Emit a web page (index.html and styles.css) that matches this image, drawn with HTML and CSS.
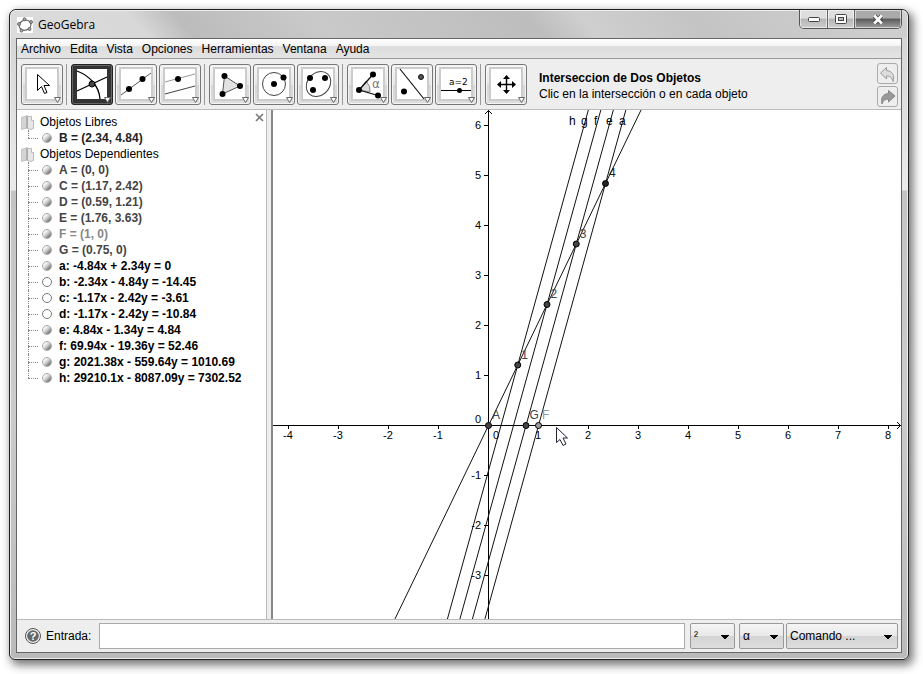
FILE: index.html
```html
<!DOCTYPE html>
<html lang="es">
<head>
<meta charset="utf-8">
<title>GeoGebra</title>
<link rel="stylesheet" href="styles.css">
</head>
<body>
<div class="window">
  <header class="titlebar">
    <svg class="logo" width="16" height="16" viewBox="0 0 16 16" aria-hidden="true">
      <rect width="16" height="16" fill="#fff"/>
      <ellipse cx="8" cy="8.2" rx="6" ry="5" fill="none" stroke="#666" stroke-width="1.2" transform="rotate(-18 8 8)"/>
      <g fill="#aaa" stroke="#555" stroke-width=".8"><circle cx="7.5" cy="2.2" r="1.5"/><circle cx="14" cy="5" r="1.5"/><circle cx="12.5" cy="12" r="1.5"/><circle cx="4.5" cy="13.6" r="1.5"/><circle cx="2" cy="7" r="1.5"/></g>
    </svg>
    <h1>GeoGebra</h1>
    <div class="winbuttons">
      <button class="wb min" aria-label="Minimizar"><svg width="14" height="8" viewBox="0 0 14 8"><rect x="1.5" y="2.5" width="11" height="4" rx="1" fill="#fff" stroke="#444"/></svg></button>
      <button class="wb max" aria-label="Maximizar"><svg width="12" height="10" viewBox="0 0 12 10"><rect x=".5" y=".5" width="11" height="9" rx="1" fill="#fff" stroke="#444"/><rect x="3.5" y="3.5" width="5" height="3" fill="#bbb" stroke="#444"/></svg></button>
      <button class="wb close" aria-label="Cerrar"><svg width="12" height="11" viewBox="0 0 12 11"><path d="M2.5 2 9.5 9M9.5 2 2.5 9" stroke="#444" stroke-width="4.4"/><path d="M2.2 1.5 9.8 9.5M9.8 1.5 2.2 9.5" stroke="#fff" stroke-width="2.6"/></svg></button>
    </div>
  </header>

  <main class="client">
    <nav class="menubar">
      <a href="#">Archivo</a><a href="#">Edita</a><a href="#">Vista</a><a href="#">Opciones</a><a href="#">Herramientas</a><a href="#">Ventana</a><a href="#">Ayuda</a>
    </nav>

    <div class="toolbar">
      <button class="tool" aria-label="Elige y mueve"><svg width="42" height="41"><path d="M16.5 10.5v16l4-4 3 7 2.5-1-3-7h5.5z" fill="#fff" stroke="#000"/><path class="arrow" d="M33.5 33.5h6l-3 5z"/></svg></button>
      <span class="sep"></span>
      <button class="tool selected" aria-label="Intersección de dos objetos"><svg width="42" height="41"><path d="M6 7C19 12 28 22 29 35M6 27 36 13" fill="none" stroke="#000" stroke-width="1.3"/><circle cx="21" cy="20" r="3" fill="#444" stroke="#000"/><path class="arrow" d="M33.5 33.5h6l-3 5z"/></svg></button>
      <button class="tool" aria-label="Recta que pasa por dos puntos"><svg width="42" height="41"><path d="M6 31 36 9" stroke="#555"/><circle cx="14" cy="25" r="3"/><circle cx="27.5" cy="15" r="3"/><path class="arrow" d="M33.5 33.5h6l-3 5z"/></svg></button>
      <button class="tool" aria-label="Recta paralela"><svg width="42" height="41"><path d="M6 18 36 10" stroke="#999"/><path d="M6 30 36 22" stroke="#444"/><circle cx="19" cy="15" r="3"/><path class="arrow" d="M33.5 33.5h6l-3 5z"/></svg></button>
      <span class="sep"></span>
      <button class="tool" aria-label="Polígono"><svg width="42" height="41"><path d="M15.5 12 13.5 30 31 22z" fill="#e2e2e2" stroke="#555"/><circle cx="15.5" cy="12" r="3"/><circle cx="13.5" cy="30" r="3"/><circle cx="31" cy="22" r="3"/><path class="arrow" d="M33.5 33.5h6l-3 5z"/></svg></button>
      <button class="tool" aria-label="Circunferencia"><svg width="42" height="41"><circle cx="21" cy="20" r="11.5" fill="none" stroke="#444"/><circle cx="21" cy="20" r="3"/><circle cx="30.5" cy="13.5" r="3"/><path class="arrow" d="M33.5 33.5h6l-3 5z"/></svg></button>
      <button class="tool" aria-label="Elipse"><svg width="42" height="41"><ellipse cx="21.5" cy="20" rx="13.5" ry="11" fill="none" stroke="#444" transform="rotate(-48 21.5 20)"/><circle cx="13" cy="14" r="3"/><circle cx="28" cy="14" r="3"/><circle cx="16" cy="26" r="3"/><path class="arrow" d="M33.5 33.5h6l-3 5z"/></svg></button>
      <span class="sep"></span>
      <button class="tool" aria-label="Ángulo"><svg width="42" height="41"><path d="M12 26 19 17Q24 22 23 28z" fill="#ddd" stroke="#888"/><path d="M26 10.5 12 26 31 31.5" fill="none" stroke="#111" stroke-width="1.3"/><circle cx="26" cy="10.5" r="3"/><circle cx="12" cy="26" r="3"/><circle cx="31" cy="31.5" r="3"/><text x="25" y="24" class="alpha">α</text><path class="arrow" d="M33.5 33.5h6l-3 5z"/></svg></button>
      <button class="tool" aria-label="Simetría axial"><svg width="42" height="41"><path d="M9 5 33 35" stroke="#111" stroke-width="1.2"/><circle cx="30" cy="13" r="2.5" fill="#555" stroke="#111"/><circle cx="13" cy="27.5" r="3"/><path class="arrow" d="M33.5 33.5h6l-3 5z"/></svg></button>
      <button class="tool" aria-label="Deslizador"><svg width="42" height="41"><path d="M6 26.5H36" stroke="#000"/><circle cx="24.5" cy="26.5" r="2.5"/><text x="14" y="21" class="slider">a=2</text><path class="arrow" d="M33.5 33.5h6l-3 5z"/></svg></button>
      <span class="sep"></span>
      <button class="tool" aria-label="Desplaza vista gráfica"><svg width="42" height="41"><path d="M21.5 12V29M13 20.5H30" stroke="#000" stroke-width="1.4"/><path d="M21.5 11 25 15H18zM21.5 30 25 26H18zM12 20.5 16 17V24zM31 20.5 27 17V24z"/><path class="arrow" d="M33.5 33.5h6l-3 5z"/></svg></button>
      <div class="help">
        <strong>Interseccion de Dos Objetos</strong>
        <span>Clic en la intersección o en cada objeto</span>
      </div>
      <div class="history">
        <button aria-label="Deshacer"><svg width="19" height="18"><path d="M2.5 8 8.5 2.5V5.5C14 6 17 10 15 16.5 14 12.5 12 11 8.5 11V14z" fill="#ddd" stroke="#999"/></svg></button>
        <button aria-label="Rehacer"><svg width="19" height="18"><path d="M17 8 10.5 2.5V5.5C5 6 2.5 9.5 4 16 5 12.5 7 11 10.5 11V14z" fill="#999" stroke="#888"/></svg></button>
      </div>
    </div>

    <div class="work">
      <aside class="algebra">
        <button class="shut" aria-label="Cerrar vista"><svg width="9" height="9"><path d="M1 1 8 8M8 1 1 8" stroke="#777" stroke-width="1.6"/></svg></button>
        <h2><svg class="folder" width="13" height="15"><path d="M.5 2.500 6 .5V13l-5.500 1.500z" fill="#d4d4d4" stroke="#c4c4c4"/><path d="M6.500 1.500h4v4h2v8l-3 1-3-1z" fill="#e6e6e6" stroke="#bbb"/><path d="M6 1v12.500" stroke="#999"/></svg>Objetos Libres</h2>
        <ul>
          <li class="c1"><i></i>B = (2.34, 4.84)</li>
        </ul>
        <h2><svg class="folder" width="13" height="15"><path d="M.5 2.500 6 .5V13l-5.500 1.500z" fill="#d4d4d4" stroke="#c4c4c4"/><path d="M6.500 1.500h4v4h2v8l-3 1-3-1z" fill="#e6e6e6" stroke="#bbb"/><path d="M6 1v12.500" stroke="#999"/></svg>Objetos Dependientes</h2>
        <ul>
          <li class="c2"><i></i>A = (0, 0)</li>
          <li class="c2"><i></i>C = (1.17, 2.42)</li>
          <li class="c2"><i></i>D = (0.59, 1.21)</li>
          <li class="c2"><i></i>E = (1.76, 3.63)</li>
          <li class="c3"><i></i>F = (1, 0)</li>
          <li class="c2"><i></i>G = (0.75, 0)</li>
          <li><i></i>a: -4.84x + 2.34y = 0</li>
          <li><i class="off"></i>b: -2.34x - 4.84y = -14.45</li>
          <li><i class="off"></i>c: -1.17x - 2.42y = -3.61</li>
          <li><i class="off"></i>d: -1.17x - 2.42y = -10.84</li>
          <li><i></i>e: 4.84x - 1.34y = 4.84</li>
          <li><i></i>f: 69.94x - 19.36y = 52.46</li>
          <li><i></i>g: 2021.38x - 559.64y = 1010.69</li>
          <li><i></i>h: 29210.1x - 8087.09y = 7302.52</li>
        </ul>
      </aside>
      <div class="sash"></div>
      <section class="graph" aria-label="Vista gráfica">
        <svg class="plot" id="plot" role="img" aria-label="Rectas a, e, f, g y h"></svg>
      </section>
    </div>

    <form class="inputbar">
      <svg class="q" width="16" height="16" viewBox="0 0 16 16"><circle cx="8" cy="8" r="7.5" fill="#eee" stroke="#555"/><circle cx="8" cy="8" r="5.8" fill="#666"/><text x="8" y="12" text-anchor="middle">?</text></svg>
      <label for="entrada">Entrada:</label>
      <input id="entrada" type="text">
      <select class="small sup" aria-label="Símbolo"><option>²</option></select>
      <select class="small" aria-label="Letra griega"><option>α</option></select>
      <select class="cmd" aria-label="Comando"><option>Comando ...</option></select>
    </form>
  </main>
</div>
<script src="plot.js"></script>
</body>
</html>
```
FILE: styles.css
```css
* { box-sizing: border-box; }
body {
  margin: 0;
  padding: 9px 14px 14px 9px;
  height: 100vh;
  background: #fff;
  font: 12px/16px "Liberation Sans", sans-serif;
  color: #000;
}
button, input, select { font: inherit; color: inherit; margin: 0; }
button { padding: 0; }
svg { display: block; }

.window {
  height: 100%;
  display: flex;
  flex-direction: column;
  padding: 0 6px 6px;
  border: 1px solid #222;
  border-radius: 7px 7px 6px 6px;
  background: linear-gradient(#d2d2d2 0, #ebebeb 180px, #c4c4c4 181px, #cccccc 60%, #bababa);
  box-shadow: inset 0 0 0 1px #eee, 3px 4px 10px 1px rgba(0, 0, 0, .55);
}
.titlebar {
  flex: none;
  height: 28px;
  margin: 0 -5px;
  padding: 0 5px 0 6px;
  display: flex;
  align-items: center;
  border-radius: 6px 6px 0 0;
  border-top: 1px solid #eee;
  background: linear-gradient(50deg, #dcdcdc 0, #d8d8d8 15%, #bcbcbc 20%, #c9c9c9 35%, #bdbdbd 58%, #cfcfcf 64%, #c4c4c4 76%, #d0d0d0);
}
.titlebar h1 { margin: 0 0 0 5px; font: 12px/16px "Open Sans", sans-serif; }
.winbuttons {
  display: flex;
  align-self: flex-start;
  margin: -1px 0 0 auto;
  height: 19px;
  border: 1px solid #555;
  border-top: 0;
  border-radius: 0 0 5px 5px;
  overflow: hidden;
}
.wb {
  display: flex;
  align-items: center;
  justify-content: center;
  border: 0;
  border-right: 1px solid #666;
  box-shadow: inset 0 0 0 1px rgba(255, 255, 255, .55);
  background: linear-gradient(#dedede 45%, #b4b4b4 50%, #cfcfcf);
}
.min { width: 28px; }
.max { width: 27px; }
.close { width: 46px; border-right: 0; background: linear-gradient(#aaa 45%, #5a5a5a 50%, #a0a0a0); }

.client {
  flex: 1;
  min-height: 0;
  display: flex;
  flex-direction: column;
  border: 1px solid #666;
  background: #eee;
}
.menubar {
  flex: none;
  display: flex;
  gap: 9px;
  height: 20px;
  padding: 2px 4px 0;
  border-bottom: 1px solid #999;
  background: linear-gradient(#fff, #f4f4f4 35%, #dcdcdc 40%, #e4e4e4);
}
.menubar a { color: inherit; text-decoration: none; }

.toolbar {
  flex: none;
  display: flex;
  gap: 2px;
  height: 51px;
  padding: 5px 4px 0;
  border-bottom: 1px solid #bbb;
}
.tool {
  position: relative;
  flex: none;
  width: 42px;
  height: 41px;
  border: 1px solid #777;
  border-radius: 3px;
  background: linear-gradient(#f6f6f6, #e6e6e6 50%, #d6d6d6 52%, #dedede);
  box-shadow: inset 0 0 0 1px #f4f4f4;
}
.tool::before {
  content: "";
  position: absolute;
  inset: 2px 3px 3px;
  border: 2px solid #ccc;
  background: #fff;
}
.tool svg { position: absolute; left: -1px; top: -1px; }
.selected { background: #333; border-color: #222; box-shadow: inset 0 0 0 1px #666; }
.selected::before { border-color: #333; }
.arrow { fill: #fff; stroke: #666; }
.alpha { font: 12px "DejaVu Sans", sans-serif; fill: #777; }
.slider { font: 9px "DejaVu Sans", sans-serif; }
.sep { flex: none; width: 1px; height: 41px; margin: 0 2px 0 1px; background: #999; }
.help { display: flex; flex-direction: column; margin: 6px 0 0 10px; white-space: nowrap; }
.history { display: flex; flex-direction: column; gap: 2px; margin: -1px -1px 0 auto; }
.history button {
  width: 21px;
  height: 21px;
  border: 1px solid #aaa;
  border-radius: 3px;
  background: #eee;
}

.work { flex: 1; min-height: 0; display: flex; background: #fff; }
.algebra {
  position: relative;
  flex: none;
  width: 250px;
  padding: 4px 0 0 4px;
  border-right: 1px solid #bbb;
  overflow: hidden;
}
.algebra h2 {
  display: flex;
  align-items: center;
  gap: 6px;
  margin: 0;
  height: 16px;
  font: inherit;
}
.algebra ul { margin: 0; padding: 0 0 0 7px; list-style: none; font-weight: bold; }
.algebra li { position: relative; display: flex; align-items: center; height: 16px; padding-left: 14px; white-space: nowrap; }
.algebra li::before {
  content: "";
  position: absolute;
  left: 0;
  top: 0;
  width: 10px;
  height: 8px;
  border-bottom: 1px dotted #888;
}
.algebra li::after {
  content: "";
  position: absolute;
  left: 0;
  top: 0;
  height: 16px;
  border-left: 1px dotted #888;
}
.algebra li:last-child::after { height: 8px; }
.algebra i {
  width: 10px;
  height: 10px;
  margin-right: 7px;
  border: 1px solid #aaa;
  border-radius: 50%;
  background: linear-gradient(135deg, #fff 15%, #d8d8d8 45%, #888 75%, #777);
}
.algebra i.off { background: #fff; border-color: #777; }
.c1 { color: #222; }
.c2 { color: #444; }
.c3 { color: #888; }
.shut { position: absolute; z-index: 1; top: 3px; right: 2px; border: 0; background: none; }
.sash { flex: none; width: 6px; background: #eee; border-right: 2px solid #888; }
.graph { flex: 1; min-width: 0; overflow: hidden; }
.plot { width: 100%; height: 100%; overflow: hidden; }
.axis { stroke: #000; fill: none; shape-rendering: crispEdges; }
.tip { stroke: #000; fill: none; }
.line { stroke: #111; }
.num { font: 11px "Liberation Sans", sans-serif; }
.name { font: 12px "Liberation Sans", sans-serif; }

.inputbar {
  flex: none;
  display: flex;
  align-items: center;
  height: 33px;
  padding: 0 3px 0 8px;
  border-top: 1px solid #bbb;
}
.q { flex: none; }
.q text { font: bold 11px "Liberation Sans", sans-serif; fill: #fff; }
.inputbar label { margin: 0 8px 0 5px; }
.inputbar input {
  flex: 1;
  min-width: 0;
  height: 26px;
  margin-right: 5px;
  border: 1px solid #aaa;
  background: #fff;
}
.inputbar select {
  appearance: none;
  height: 26px;
  padding: 0 3px;
  border: 1px solid #999;
  border-radius: 2px;
  background:
    linear-gradient(to bottom right, #000 50%, transparent 51%) right 5px top 11px / 4px 4px no-repeat,
    linear-gradient(to bottom left, #000 50%, transparent 51%) right 9px top 11px / 4px 4px no-repeat,
    linear-gradient(#f5f5f5, #e8e8e8 50%, #d4d4d4 52%, #ddd);
}
.small { width: 45px; margin-right: 4px; }
.small + .cmd { margin-left: -2px; }
.cmd { width: 112px; }
```
FILE: plot.js
```js
const NS = "http://www.w3.org/2000/svg";
const plot = document.getElementById("plot");
const OX = 215, OY = 315, UNIT = 50;
const px = x => OX + x * UNIT;
const py = y => OY - y * UNIT;

function add(tag, attrs, text) {
  const el = document.createElementNS(NS, tag);
  for (const key in attrs) el.setAttribute(key, attrs[key]);
  if (text !== undefined) el.textContent = text;
  plot.append(el);
}

const W = plot.clientWidth, H = plot.clientHeight;

// Axes with arrow tips
add("path", { class: "axis", d: `M0 ${OY + 0.5}H${W}M${OX + 0.5} 0V${H}` });
add("path", { class: "tip", d: `M${W - 4} ${OY - 3}l3.5 3.5l-3.5 3.5M${OX - 3} 4l3.5 -3.5l3.5 3.5` });

// Ticks and numbers
for (let n = -4; n <= 8; n++) {
  if (n !== 0) add("path", { class: "axis", d: `M${px(n) + 0.5} ${OY}v4` });
  add("text", { class: "num", x: n ? px(n) : px(n) + 8, y: OY + 14, "text-anchor": "middle" }, n);
}
for (let n = -3; n <= 6; n++) {
  if (n !== 0) add("path", { class: "axis", d: `M${OX - 4} ${py(n) + 0.5}h4` });
  add("text", { class: "num", x: OX - 7, y: n ? py(n) + 4 : OY - 2, "text-anchor": "end" }, n);
}

// Lines x = x0 + y / slope
const lines = [[0, 4.84 / 2.34], [1, 3.612], [0.75, 3.612], [0.5, 3.612], [0.25, 3.612]];
for (const [x0, slope] of lines) {
  const low = -20, high = 20;
  add("line", { class: "line", x1: px(x0 + low / slope) + 0.5, y1: py(low) + 0.5, x2: px(x0 + high / slope) + 0.5, y2: py(high) + 0.5 });
}

// Points with captions
const points = [
  [0, 0, "A", "#444"], [0.585, 1.21, "1", "#444"], [1.17, 2.42, "2", "#444"],
  [1.755, 3.63, "3", "#444"], [2.34, 4.84, "4", "#222"], [0.75, 0, "G", "#444"], [1, 0, "F", "#999"]
];
for (const [x, y, name, color] of points) {
  add("circle", { cx: px(x) + 0.5, cy: py(y) + 0.5, r: 3, fill: color, stroke: "#000" });
  add("text", { class: "name", x: px(x) + 4, y: py(y) - 6, fill: color }, name);
}

// Line names
[["h", 296], ["g", 308], ["f", 321], ["e", 333], ["a", 346]].forEach(([name, x]) => {
  add("text", { class: "name", x, y: 15 }, name);
});

// Mouse pointer
add("path", { d: "M283.5 317.5v15l3.5-3 3 6 3-1.5-3-6h4.5z", fill: "#fff", stroke: "#223" });
```
